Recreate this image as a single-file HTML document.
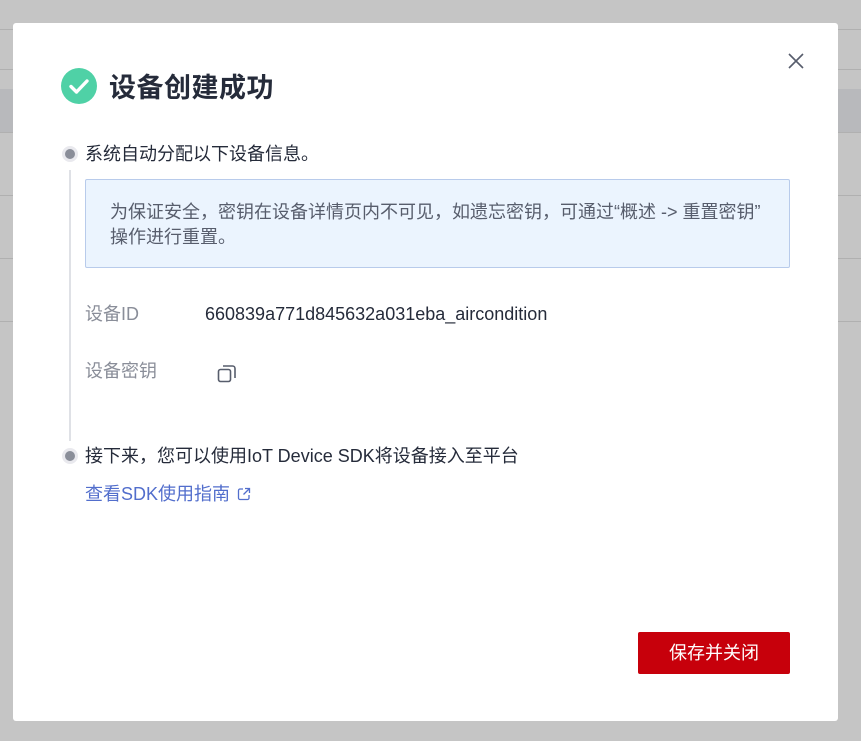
<!DOCTYPE html>
<html><head><meta charset="utf-8"><style>
*{margin:0;padding:0;box-sizing:border-box}
body{width:861px;height:741px;overflow:hidden;background:#c5c5c5;font-family:"Liberation Sans","Noto Sans CJK SC",sans-serif;position:relative}
.ln{position:absolute;left:0;right:0;height:1px;background:#b0b0b0}
.band{position:absolute;left:0;right:0;top:89px;height:43px;background:#b8b9bc}
.modal{position:absolute;left:13px;top:23px;width:825px;height:698px;background:#fff;border-radius:3px}
.title{position:absolute;left:48px;top:43px;display:flex;align-items:center}
.ok{width:36px;height:36px;border-radius:50%;background:#4fd1a6;position:relative}
.title h1{font-size:27px;font-weight:bold;color:#252b3a;margin-left:12px;letter-spacing:0.5px}
.close{position:absolute;left:774px;top:29px}
.dot{position:absolute;width:16px;height:16px;border-radius:50%;background:#8a8e99;border:3px solid #e9e9ee}
.vline{position:absolute;left:56px;top:147px;width:2px;height:271px;background:#dfe1e6}
.t{position:absolute;font-size:18px;line-height:24px;color:#252b3a;white-space:nowrap}
.info{position:absolute;left:72px;top:156px;width:705px;height:89px;background:#ebf4fe;border:1px solid #b8cbeb;border-radius:2px;padding:20px 24px;font-size:18px;line-height:25px;color:#575d6c;white-space:nowrap}
.lbl{color:#8a8e99}
.btn{position:absolute;left:625px;top:609px;width:152px;height:42px;background:#c7000b;border-radius:2px;color:#fff;font-size:18px;text-align:center;line-height:42px}
</style></head><body>
<div class="ln" style="top:29px"></div><div class="ln" style="top:69px"></div>
<div class="band"></div>
<div class="ln" style="top:132px"></div><div class="ln" style="top:195px"></div><div class="ln" style="top:258px"></div><div class="ln" style="top:321px"></div>
<div class="modal">
 <div class="title"><div class="ok"><svg width="36" height="36" viewBox="0 0 36 36"><path d="M10 18.5l5.5 5.5L26 13" fill="none" stroke="#fff" stroke-width="3.4" stroke-linecap="round" stroke-linejoin="round"/></svg></div><h1>设备创建成功</h1></div>
 <svg class="close" width="18" height="18" viewBox="0 0 18 18"><path d="M2 2L16 16M16 2L2 16" stroke="#575d6c" stroke-width="1.6"/></svg>
 <div class="dot" style="left:49px;top:123px"></div>
 <div class="t" style="left:72px;top:119px">系统自动分配以下设备信息。</div>
 <div class="vline"></div>
 <div class="info">为保证安全，密钥在设备详情页内不可见，如遗忘密钥，可通过“概述 -&gt; 重置密钥”<br>操作进行重置。</div>
 <div class="t lbl" style="left:72px;top:279px">设备ID</div>
 <div class="t" style="left:192px;top:279px;color:#252b3a">660839a771d845632a031eba_aircondition</div>
 <div class="t lbl" style="left:72px;top:336px">设备密钥</div>
 <svg style="position:absolute;left:204px;top:341px" width="20" height="20" viewBox="0 0 20 20"><rect x="1.5" y="5.5" width="12" height="12" rx="2" fill="none" stroke="#575d6c" stroke-width="1.6"/><path d="M6 2h9.5a2.5 2.5 0 0 1 2.5 2.5V14" fill="none" stroke="#575d6c" stroke-width="1.6"/></svg>
 <div class="dot" style="left:49px;top:425px"></div>
 <div class="t" style="left:72px;top:421px">接下来，您可以使用IoT Device SDK将设备接入至平台</div>
 <div class="t" style="left:72px;top:459px;color:#526ecc">查看SDK使用指南</div>
 <svg style="position:absolute;left:224px;top:464px" width="14" height="14" viewBox="0 0 14 14"><path d="M6 2H3a1.5 1.5 0 0 0-1.5 1.5v7.5A1.5 1.5 0 0 0 3 12.5h7.5A1.5 1.5 0 0 0 12 11V8M8 1.5h4.5V6M12.5 1.5L6.5 7.5" fill="none" stroke="#526ecc" stroke-width="1.3"/></svg>
 <div class="btn">保存并关闭</div>
</div>
</body></html>
